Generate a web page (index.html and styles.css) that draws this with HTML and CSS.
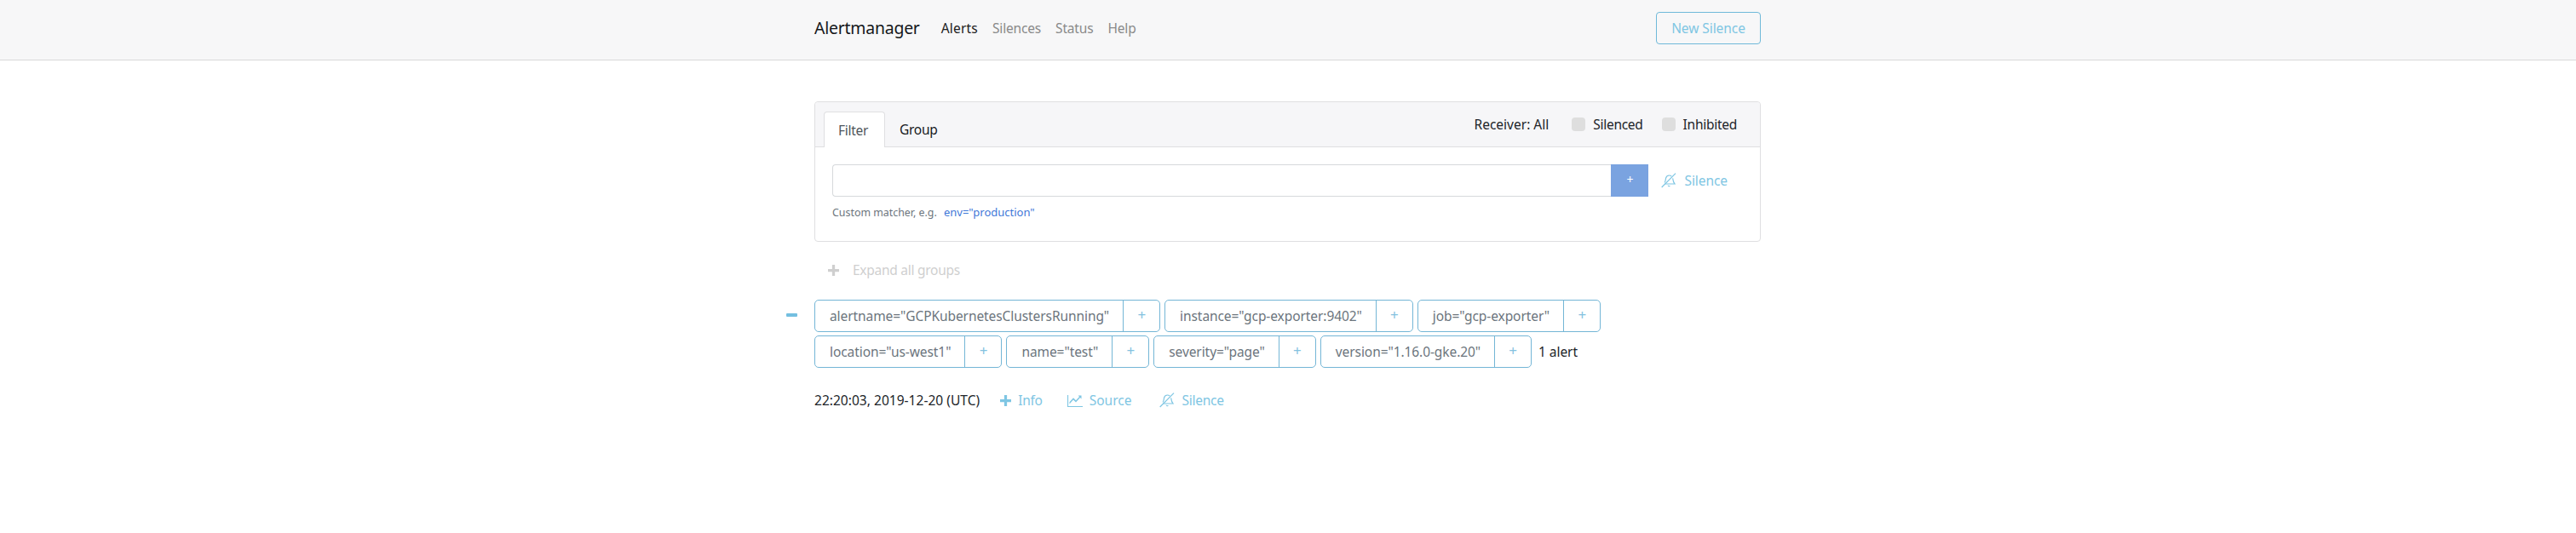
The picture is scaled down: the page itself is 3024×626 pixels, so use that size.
FILE: index.html
```html
<!DOCTYPE html>
<html lang="en">
<head>
<meta charset="utf-8">
<title>Alertmanager</title>
<link rel="stylesheet" href="styles.css">
</head>
<body>
<header class="navbar">
  <div class="container nav-inner">
    <a class="brand">Alertmanager</a>
    <nav class="nav-links">
      <a class="nav-link active">Alerts</a>
      <a class="nav-link">Silences</a>
      <a class="nav-link">Status</a>
      <a class="nav-link">Help</a>
    </nav>
    <a class="btn-new">New Silence</a>
  </div>
</header>
<main class="container main">
  <section class="card">
    <div class="card-header">
      <ul class="tabs">
        <li class="tab active">Filter</li>
        <li class="tab">Group</li>
      </ul>
      <div class="filters">
        <span class="receiver">Receiver: All</span>
        <label class="check"><span class="box"></span>Silenced</label>
        <label class="check"><span class="box"></span>Inhibited</label>
      </div>
    </div>
    <div class="card-body">
      <div class="input-row">
        <input class="matcher" type="text" aria-label="Custom matcher">
        <span class="add-btn">+</span>
        <a class="link silence-link">
          <svg class="icon-bell" viewBox="0 0 18 18"><use href="#bell"/></svg>Silence
        </a>
      </div>
      <p class="hint">Custom matcher, e.g. <a class="hint-code">env="production"</a></p>
    </div>
  </section>

  <a class="expand-all"><svg class="icon-plus" viewBox="0 0 12 12"><path d="M4.5 0h3v4.5H12v3H7.5V12h-3V7.5H0v-3h4.5z"/></svg>Expand all groups</a>

  <section class="group">
    <span class="collapse"></span>
    <div class="labels">
      <span class="label"><span class="label-text">alertname="GCPKubernetesClustersRunning"</span><span class="label-add">+</span></span>
      <span class="label"><span class="label-text">instance="gcp-exporter:9402"</span><span class="label-add">+</span></span>
      <span class="label"><span class="label-text">job="gcp-exporter"</span><span class="label-add">+</span></span>
      <span class="label"><span class="label-text">location="us-west1"</span><span class="label-add">+</span></span>
      <span class="label"><span class="label-text">name="test"</span><span class="label-add">+</span></span>
      <span class="label"><span class="label-text">severity="page"</span><span class="label-add">+</span></span>
      <span class="label"><span class="label-text">version="1.16.0-gke.20"</span><span class="label-add">+</span></span>
      <span class="count">1 alert</span>
    </div>
  </section>

  <div class="alert-row">
    <span class="time">22:20:03, 2019-12-20 (UTC)</span>
    <a class="link"><svg class="icon-plus" viewBox="0 0 12 12"><path d="M4.5 0h3v4.5H12v3H7.5V12h-3V7.5H0v-3h4.5z"/></svg>Info</a>
    <a class="link source-link"><svg class="icon-chart" viewBox="0 0 18 15"><path d="M0.5 1v13.5H18" fill="none" stroke="currentColor" stroke-width="1.2"/><path d="M2.5 11.5 7 6.5l3 3L15 4l1.5 1.5V1.6h-3.8L14 3l-4 4.3-3-3-4.5 5z"/></svg>Source</a>
    <a class="link"><svg class="icon-bell" viewBox="0 0 18 18"><use href="#bell"/></svg>Silence</a>
  </div>
</main>
<svg class="defs" aria-hidden="true">
  <symbol id="bell" viewBox="0 0 18 18">
    <path d="M0.7 17 17 0.7" fill="none" stroke="currentColor" stroke-width="1.2"/>
    <path d="M4 11.5C5.5 9.5 5.2 7.5 5.6 6 6.2 4 8 3 9.5 3c1 0 1.9.3 2.7 1M13.6 6.3c.4 2.800 1 5 2.400 6.700H4.500" fill="none" stroke="currentColor" stroke-width="1.200"/>
    <path d="M7.500 14.500a2 2 0 0 0 3.500 1z"/>
  </symbol>
</svg>
</body>
</html>
```
FILE: styles.css
```css
* { box-sizing: border-box; }
html, body { margin: 0; padding: 0; }
body {
  background: #fff;
  color: #212529;
  font-family: "Noto Sans", "Open Sans", sans-serif;
  font-size: 15.5px;
  letter-spacing: -0.27px;
  line-height: 24px;
}
a { text-decoration: none; }
.defs { display: none; }
.container { width: 1140px; margin: 0 auto; padding: 0 15px 0 14px; }

.navbar { height: 71px; background: #f7f7f8; border-bottom: 1px solid #d9d9d9; }
.nav-inner { display: flex; align-items: center; height: 66px; }
.brand { font-size: 19.4px; letter-spacing: -0.2px; color: #15181b; margin-right: 25px; }
.nav-links { display: flex; gap: 17px; flex: 1; }
.nav-link { color: #8a8a8a; letter-spacing: -0.17px; }
.nav-link.active { color: #212121; letter-spacing: 0.2px; }
.btn-new {
  display: block; width: 123px; height: 38px; line-height: 36px; text-align: center;
  color: #7fc6e3; border: 1px solid #6fb9d9; border-radius: 4px; letter-spacing: -0.07px;
}

.main { padding-top: 48px; }
.card { height: 165px; border: 1px solid #dfdfe1; border-radius: 4px; }
.card-header {
  display: flex; justify-content: space-between; height: 53px; padding: 11px 27px 0 10px;
  background: #f6f6f8; border-bottom: 1px solid #dfdfe1; border-radius: 4px 4px 0 0;
}
.tabs { display: flex; list-style: none; margin: 0; padding: 0; }
.tab { height: 42px; padding: 9px 17px 0; line-height: 24px; color: #16191c; }
.tab.active {
  width: 72px; padding: 9px 16px 0; color: #4f565c; background: #fff;
  border: 1px solid #dfdfe1; border-bottom: 0; border-radius: 4px 4px 0 0;
}
.filters { display: flex; align-items: center; height: 30px; color: #212529; }
.receiver { margin-right: 27px; letter-spacing: 0; }
.check { display: flex; align-items: center; margin-right: 22px; }
.check:last-child { margin-right: 0; }
.box { width: 16px; height: 16px; margin-right: 9px; background: #dedede; border-radius: 4px; }

.card-body { padding: 20px 20px 0; }
.input-row { display: flex; align-items: center; height: 38px; }
.matcher {
  flex: 1; height: 38px; padding: 0 12px; background: #fff; outline: 0;
  border: 1px solid #d6d9dc; border-right: 0; border-radius: 4px 0 0 4px;
}
.add-btn {
  width: 44px; height: 38px; line-height: 36px; text-align: center; font-size: 14px;
  color: #fff; background: #7aa3e0;
}
.silence-link { margin-left: 15px; margin-right: 18px; letter-spacing: -0.07px; }
.link { display: flex; align-items: center; color: #7fc6e3; }
.icon-bell { width: 18px; height: 18px; margin-right: 9px; fill: currentColor; }
.hint { margin: 9px 0 0; font-size: 12.4px; letter-spacing: 0; line-height: 18px; color: #6c757d; }
.hint-code { margin-left: 5px; color: #3f78d8; font-size: 13px; }

.expand-all { display: flex; align-items: center; height: 24px; margin-top: 21px; padding-left: 16px; color: #cfcfcf; }
.icon-plus { width: 13px; height: 13px; margin-right: 8px; fill: currentColor; }
.expand-all .icon-plus { margin-right: 16px; }

.group { position: relative; margin-top: 23px; }
.collapse {
  position: absolute; left: -33px; top: 16px; width: 13px; height: 4px;
  background: #74bfe0; border-radius: 1px;
}
.labels { display: flex; flex-wrap: wrap; align-items: center; gap: 4px 5px; }
.label {
  display: flex; height: 38px; color: #6c757d; border: 1px solid #74b6d6; border-radius: 5px;
}
.label-text { padding: 6px 16px 6px 17px; border-right: 1px solid #74b6d6; white-space: nowrap; letter-spacing: -0.08px; }
.label-add { width: 42px; line-height: 34px; text-align: center; color: #84c2df; font-size: 17px; }
.count { margin-left: 3px; color: #212529; letter-spacing: -0.07px; }

.alert-row { display: flex; align-items: center; height: 24px; margin-top: 26px; gap: 29px; }
.alert-row .time { margin-right: -5px; letter-spacing: 0.03px; }
.source-link { margin-right: 3px; letter-spacing: 0.03px; }
.icon-chart { width: 18px; height: 15px; margin-right: 8px; fill: currentColor; }
```
